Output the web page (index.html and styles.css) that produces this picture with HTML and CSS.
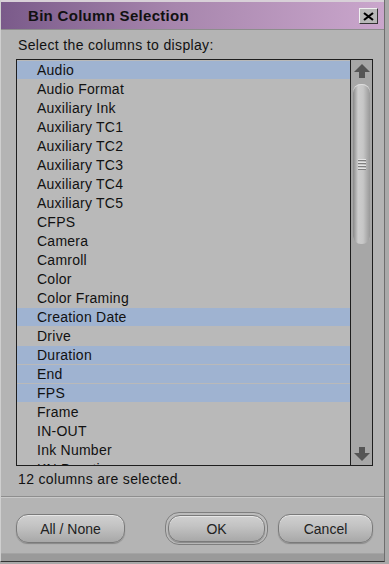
FILE: index.html
```html
<!DOCTYPE html>
<html>
<head>
<meta charset="utf-8">
<link rel="stylesheet" href="styles.css">
</head>
<body>
<div class="window">
  <div class="titlebar">
    <span class="title">Bin Column Selection</span>
    <span class="close">
      <svg width="11" height="9" viewBox="0 0 11 9"><path d="M1 1 L10 8 M10 1 L1 8" stroke="#000" stroke-width="2.2"/></svg>
    </span>
  </div>
  <div class="content">
    <div class="prompt">Select the columns to display:</div>
    <div class="listbox">
      <ul class="items">
        <li class="sel">Audio</li>
        <li>Audio Format</li>
        <li>Auxiliary Ink</li>
        <li>Auxiliary TC1</li>
        <li>Auxiliary TC2</li>
        <li>Auxiliary TC3</li>
        <li>Auxiliary TC4</li>
        <li>Auxiliary TC5</li>
        <li>CFPS</li>
        <li>Camera</li>
        <li>Camroll</li>
        <li>Color</li>
        <li>Color Framing</li>
        <li class="sel">Creation Date</li>
        <li>Drive</li>
        <li class="sel">Duration</li>
        <li class="sel">End</li>
        <li class="sel">FPS</li>
        <li>Frame</li>
        <li>IN-OUT</li>
        <li>Ink Number</li>
        <li>KN Duration</li>
      </ul>
      <div class="scrollbar">
        <div class="arrow up">
          <svg width="16" height="14" viewBox="0 0 16 14"><path d="M8 0 L16 8 L11 8 L11 14 L5 14 L5 8 L0 8 Z" fill="#555"/></svg>
        </div>
        <div class="track">
          <div class="thumb">
            <div class="grip"><i></i><i></i><i></i><i></i></div>
          </div>
        </div>
        <div class="arrow down">
          <svg width="16" height="14" viewBox="0 0 16 14"><path d="M8 14 L16 6 L11 6 L11 0 L5 0 L5 6 L0 6 Z" fill="#555"/></svg>
        </div>
      </div>
    </div>
    <div class="status">12 columns are selected.</div>
  </div>
  <div class="buttons">
    <button class="btn">All / None</button>
    <span class="default"><button class="btn">OK</button></span>
    <button class="btn">Cancel</button>
  </div>
  <div class="footer"></div>
</div>
</body>
</html>
```
FILE: styles.css
```css
html, body {
  margin: 0;
  padding: 0;
  background: #a9a9a9;
}
body {
  width: 389px;
  height: 564px;
  overflow: hidden;
  font-family: "Liberation Sans", Arial, sans-serif;
  color: #111;
}
.window {
  width: 385px;
  height: 562px;
  background: #b4b4b4;
  border-right: 1px solid #6e6e6e;
  border-bottom: 1px solid #333;
  border-left: 1px solid #cfcfcf;
  box-sizing: border-box;
  display: flex;
  flex-direction: column;
}
.titlebar {
  height: 30px;
  box-sizing: border-box;
  border-top: 2px solid #d8d0d8;
  background: linear-gradient(to right, #7a5a8a 0%, #a786ad 45%, #caa6cc 100%);
  display: flex;
  align-items: center;
  justify-content: space-between;
  padding: 0 6px 0 27px;
  border-bottom: 1px solid #8d8d8d;
}
.title {
  font-weight: bold;
  font-size: 15px;
  letter-spacing: 0.3px;
  color: #111;
}
.close {
  width: 19px;
  height: 16px;
  box-sizing: border-box;
  background: #b8b8b8;
  border: 1px solid;
  border-color: #f0f0f0 #333 #333 #f0f0f0;
  display: flex;
  align-items: center;
  justify-content: center;
  margin-top: 1px;
}
.content {
  padding: 7px 11px 0 15px;
  border-bottom: 1px solid #8e8e8e;
}
.prompt {
  font-size: 14px;
  letter-spacing: 0.35px;
  padding-left: 2px;
  height: 22px;
  line-height: 17px;
}
.listbox {
  height: 407px;
  box-sizing: border-box;
  border: 1px solid #1e1e1e;
  background: #b9b9b9;
  display: flex;
  overflow: hidden;
}
.items {
  list-style: none;
  margin: 0;
  padding: 1px 0 0 0;
  flex: 1;
  overflow: hidden;
}
.items li {
  height: 18px;
  line-height: 18px;
  margin-bottom: 1px;
  padding-left: 20px;
  font-size: 14px;
  letter-spacing: 0.25px;
  white-space: nowrap;
}
.items li.sel {
  background: #9fb3d1;
}
.scrollbar {
  width: 21px;
  border-left: 1px solid #1e1e1e;
  background: #a7a7a7;
  display: flex;
  flex-direction: column;
}
.arrow {
  height: 22px;
  display: flex;
  align-items: center;
  justify-content: center;
}
.track {
  flex: 1;
  padding: 2px 2px;
}
.thumb {
  height: 160px;
  border-radius: 8px;
  background: linear-gradient(to right, #8a8a8a 0%, #cdcdcd 30%, #c6c6c6 60%, #999 100%);
  box-shadow: inset 0 1px 0 #ddd;
  display: flex;
  align-items: center;
  justify-content: center;
}
.grip {
  display: flex;
  flex-direction: column;
  gap: 2px;
}
.grip i {
  display: block;
  width: 8px;
  height: 1px;
  background: #e4e4e4;
  box-shadow: 0 1px 0 #808080;
}
.status {
  font-size: 14px;
  letter-spacing: 0.35px;
  padding: 5px 0 0 2px;
  height: 25px;
}
.buttons {
  height: 56px;
  flex: none;
  display: flex;
  align-items: center;
  padding: 6px 11px 0 15px;
  box-sizing: border-box;
  border-top: 1px solid #c9c9c9;
}
.btn {
  font-family: "Liberation Sans", Arial, sans-serif;
  font-size: 14px;
  color: #222;
  height: 29px;
  border-radius: 12px;
  border: 1px solid #7a7a7a;
  background: linear-gradient(to bottom, #d0d0d0 0%, #c3c3c3 40%, #a8a8a8 100%);
  box-shadow: inset 0 1px 0 #e6e6e6, 0 1px 1px #888;
  padding: 0;
}
.buttons > .btn:first-child {
  width: 109px;
}
.default {
  margin-left: 40px;
  padding: 2px;
  border-radius: 14px;
  border: 1px solid #7e7e7e;
  background: #bcbcbc;
  display: flex;
}
.default .btn {
  width: 97px;
  height: 27px;
}
.buttons > .btn:last-child {
  width: 95px;
  margin-left: 10px;
}
.footer {
  flex: 1;
  background: #9a9a9a;
  border-top: 1px solid #a4a4a4;
}
```
